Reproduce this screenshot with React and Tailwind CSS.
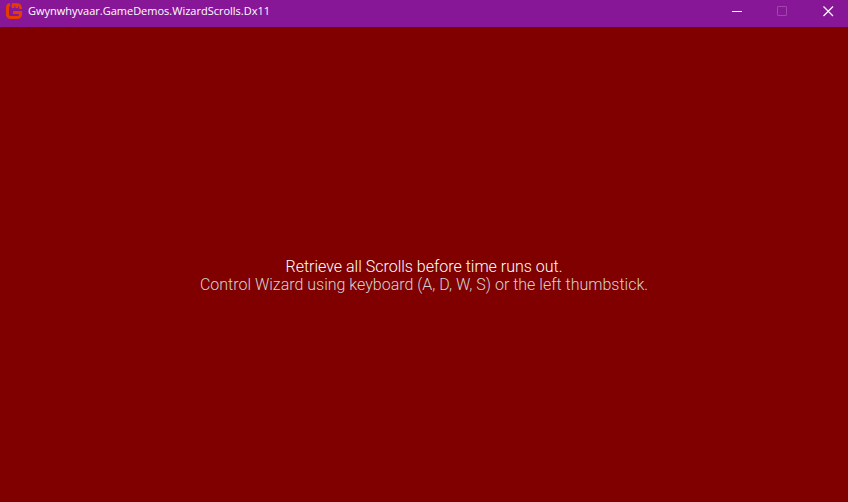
import React from "react";

function Logo() {
  return (
    <svg viewBox="0 0 16 16" className="size-4 shrink-0" fill="none" stroke="#e73c00" aria-hidden="true">
      <path d="M4 1.500A3 3 0 0 0 1.500 4.500V11.500A3 3 0 0 0 4.500 14.500H11.500A3 3 0 0 0 14.500 11.500V9.500H7" strokeWidth="3" />
      <path d="M7 5V1.500H11.500A3 3 0 0 1 14.500 4.500V6M10.800 1.500V5" strokeWidth="2.600" />
    </svg>
  );
}

function CaptionButton({ label, disabled, children }) {
  return (
    <button
      type="button"
      aria-label={label}
      disabled={disabled}
      className="flex h-full w-10 items-center justify-center pb-1 text-white disabled:text-[#a345ae]"
    >
      <svg viewBox="0 0 11 11" className="size-[11px]" fill="none" stroke="currentColor" aria-hidden="true">
        {children}
      </svg>
    </button>
  );
}

function TitleBar() {
  return (
    <header className="flex h-[27px] items-center justify-between bg-[#881798]">
      <div className="flex items-center gap-[6px] pl-[6px] pb-[5px]">
        <Logo />
        <h1 className="whitespace-nowrap font-['Open_Sans','Noto_Sans',sans-serif] text-[11px] leading-4 text-white">
          Gwynwhyvaar.GameDemos.WizardScrolls.Dx11
        </h1>
      </div>
      <div className="flex h-full gap-[6px]">
        <CaptionButton label="Minimize">
          <path d="M1 5.500H11" />
        </CaptionButton>
        <CaptionButton label="Maximize" disabled>
          <rect x="0.500" y="0.500" width="9" height="9" rx="0.500" />
        </CaptionButton>
        <CaptionButton label="Close">
          <path d="M0.500 0.500L10 10M10 0.500L0.500 10" strokeWidth="1.200" />
        </CaptionButton>
      </div>
    </header>
  );
}

export default function App() {
  return (
    <div className="flex min-h-screen flex-col bg-[#800000]">
      <TitleBar />
      <main className="flex grow flex-col items-center justify-center pt-[22px] text-center font-[Roboto,'Liberation_Sans',sans-serif] text-[16px] leading-[18px] font-light">
        <p className="text-white">Retrieve all Scrolls before time runs out.</p>
        <p className="text-[#d3d3d3]">Control Wizard using keyboard (A, D, W, S) or the left thumbstick.</p>
      </main>
    </div>
  );
}
